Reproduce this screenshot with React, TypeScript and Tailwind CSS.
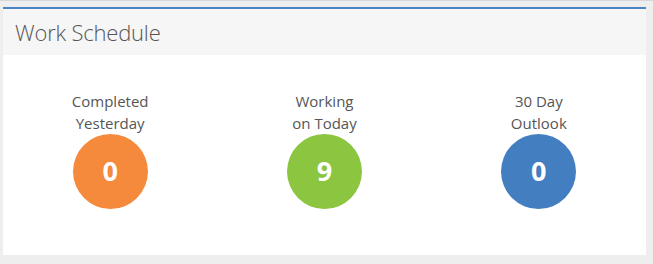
const stats = [
  { label: ["Completed", "Yesterday"], value: 0, color: "bg-[#f68a3c]" },
  { label: ["Working", "on Today"], value: 9, color: "bg-[#8cc540]" },
  { label: ["30 Day", "Outlook"], value: 0, color: "bg-[#437fc0]" },
]

const App = () => {
  return (
    <div className="h-[264px] w-[653px] bg-[#eeeeee] pt-[6px] pl-[3px] pr-[7px] font-['Open_Sans',sans-serif] border-t border-[#d8d8d8]">
      <div className="border-t-2 border-[#4a86c5] bg-white">
        <div className="h-[46px] bg-[#f6f6f6] px-[12px] flex items-center">
          <h2 className="text-[22px] font-light text-[#555] font-['Open_Sans',sans-serif] tracking-[-0.2px]">Work Schedule</h2>
        </div>
        <div className="grid grid-cols-3 h-[200px] pt-[35px]">
          {stats.map((s) => (
            <div key={s.label.join(" ")} className="flex flex-col items-center">
              <div className="text-center text-[15px] leading-[22px] text-[#555]">
                <div>{s.label[0]}</div>
                <div>{s.label[1]}</div>
              </div>
              <div className={`mt-0 w-[75px] h-[75px] rounded-full ${s.color} flex items-center justify-center text-white text-[27px] font-bold`}>
                {s.value}
              </div>
            </div>
          ))}
        </div>
      </div>
    </div>
  )
}

export default App
